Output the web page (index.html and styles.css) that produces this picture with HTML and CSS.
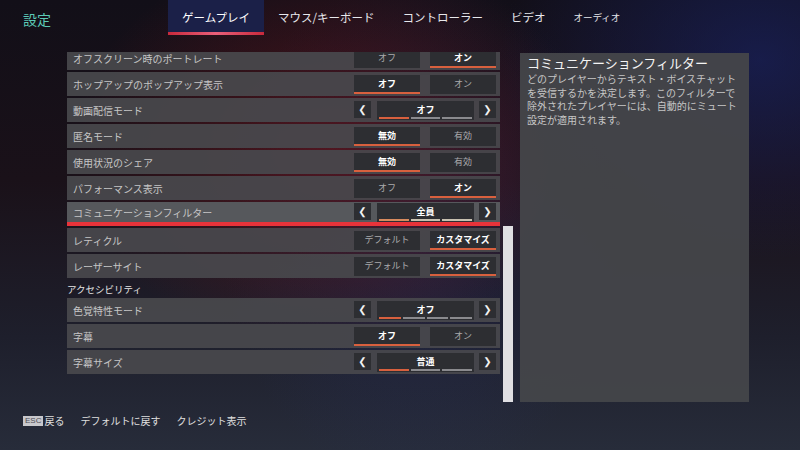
FILE: index.html
```html
<!DOCTYPE html>
<html lang="ja">
<head>
    <meta charset="UTF-8">
    <meta name="viewport" content="width=device-width, initial-scale=1.0">
    <title>設定</title>
    <link rel="stylesheet" href="styles.css">
</head>
<body>
    <header class="topbar">
        <div class="page-title">設定</div>
        <nav class="tabs">
            <div class="tab active">ゲームプレイ</div>
            <div class="tab">マウス/キーボード</div>
            <div class="tab">コントローラー</div>
            <div class="tab">ビデオ</div>
            <div class="tab small">オーディオ</div>
        </nav>
    </header>

    <main class="content">
        <div class="list-wrap">
            <div class="list">
                <div class="row">
                    <span class="label">オフスクリーン時のポートレート</span>
                    <div class="toggle">
                        <span class="opt">オフ</span>
                        <span class="opt on">オン</span>
                    </div>
                </div>
                <div class="row">
                    <span class="label">ホップアップのポップアップ表示</span>
                    <div class="toggle">
                        <span class="opt on">オフ</span>
                        <span class="opt">オン</span>
                    </div>
                </div>
                <div class="row">
                    <span class="label">動画配信モード</span>
                    <div class="picker">
                        <span class="arrow">&#10094;</span>
                        <span class="value">オフ
                            <span class="segs"><i class="cur"></i><i></i><i></i></span>
                        </span>
                        <span class="arrow">&#10095;</span>
                    </div>
                </div>
                <div class="row">
                    <span class="label">匿名モード</span>
                    <div class="toggle">
                        <span class="opt on">無効</span>
                        <span class="opt">有効</span>
                    </div>
                </div>
                <div class="row">
                    <span class="label">使用状況のシェア</span>
                    <div class="toggle">
                        <span class="opt on">無効</span>
                        <span class="opt">有効</span>
                    </div>
                </div>
                <div class="row">
                    <span class="label">パフォーマンス表示</span>
                    <div class="toggle">
                        <span class="opt">オフ</span>
                        <span class="opt on">オン</span>
                    </div>
                </div>
                <div class="row selected">
                    <span class="label">コミュニケーションフィルター</span>
                    <div class="picker">
                        <span class="arrow">&#10094;</span>
                        <span class="value">全員
                            <span class="segs light"><i class="cur"></i><i></i><i></i></span>
                        </span>
                        <span class="arrow">&#10095;</span>
                    </div>
                </div>
                <div class="row">
                    <span class="label">レティクル</span>
                    <div class="toggle">
                        <span class="opt">デフォルト</span>
                        <span class="opt on">カスタマイズ</span>
                    </div>
                </div>
                <div class="row">
                    <span class="label">レーザーサイト</span>
                    <div class="toggle">
                        <span class="opt">デフォルト</span>
                        <span class="opt on">カスタマイズ</span>
                    </div>
                </div>
                <div class="section">アクセシビリティ</div>
                <div class="row">
                    <span class="label">色覚特性モード</span>
                    <div class="picker">
                        <span class="arrow">&#10094;</span>
                        <span class="value">オフ
                            <span class="segs"><i class="cur"></i><i></i><i></i><i></i></span>
                        </span>
                        <span class="arrow">&#10095;</span>
                    </div>
                </div>
                <div class="row">
                    <span class="label">字幕</span>
                    <div class="toggle">
                        <span class="opt on">オフ</span>
                        <span class="opt">オン</span>
                    </div>
                </div>
                <div class="row">
                    <span class="label">字幕サイズ</span>
                    <div class="picker">
                        <span class="arrow">&#10094;</span>
                        <span class="value">普通
                            <span class="segs"><i class="cur"></i><i></i><i></i></span>
                        </span>
                        <span class="arrow">&#10095;</span>
                    </div>
                </div>
            </div>
        </div>
        <div class="scrollbar"><div class="thumb"></div></div>
        <aside class="info">
            <h2>コミュニケーションフィルター</h2>
            <p>どのプレイヤーからテキスト・ボイスチャット<br>を受信するかを決定します。このフィルターで<br>除外されたプレイヤーには、自動的にミュート<br>設定が適用されます。</p>
        </aside>
    </main>

    <footer class="bottombar">
        <span class="hint"><span class="key">ESC</span>戻る</span>
        <span class="hint">デフォルトに戻す</span>
        <span class="hint">クレジット表示</span>
    </footer>
</body>
</html>
```

FILE: styles.css
```css
body {
    margin: 0;
    width: 800px;
    height: 450px;
    overflow: hidden;
    font-family: "Noto Sans CJK JP", "Noto Sans", sans-serif;
    color: #d0d0d0;
    background:
        radial-gradient(ellipse 260px 200px at 330px 150px, rgba(115, 22, 28, 0.6), transparent),
        radial-gradient(ellipse 200px 260px at 420px 230px, rgba(40, 50, 110, 0.35), transparent),
        radial-gradient(ellipse 260px 200px at 760px 60px, rgba(25, 35, 100, 0.65), transparent),
        linear-gradient(180deg, #120f18 0%, #1a1119 40%, #1e1f2c 75%, #272c3a 100%);
}

.topbar {
    display: flex;
    align-items: flex-start;
    height: 35px;
}
.page-title {
    width: 145px;
    padding: 9px 0 0 23px;
    font-size: 14px;
    color: #5cc9b6;
}
.tabs {
    display: flex;
}
.tab {
    height: 32px;
    line-height: 35px;
    padding: 0 14px;
    font-size: 11.5px;
    color: #e8e8ec;
    border-bottom: 3px solid transparent;
}
.tab.active {
    background: #1b2048;
    border-image: linear-gradient(90deg, #c8283a, #e8607a 50%, #c8283a) 1;
    color: #fff;
}
.tab.small {
    font-size: 9.5px;
}

.content {
    display: flex;
    height: 350px;
    margin-top: 17px;
    padding-left: 67px;
}
.list-wrap {
    width: 433px;
    overflow: hidden;
}
.list {
    display: flex;
    flex-direction: column;
    gap: 2px;
    margin-top: -6px;
}
.row {
    display: flex;
    align-items: center;
    justify-content: space-between;
    height: 24px;
    padding: 0 4px 0 6px;
    background: rgba(72, 72, 76, 0.93);
}
.row.selected {
    height: 20px;
    background: #56585c;
    border-bottom: 4px solid #e8333a;
}
.label {
    font-size: 10px;
    color: #c6c6c6;
}
.section {
    height: 16px;
    line-height: 18px;
    font-size: 9.5px;
    color: #e6e6e6;
}

.toggle {
    display: flex;
    gap: 10px;
}
.opt {
    width: 66px;
    height: 17px;
    line-height: 17px;
    text-align: center;
    font-size: 9px;
    color: #ababad;
    background: #2d2e32;
    border-bottom: 2px solid transparent;
}
.opt.on {
    color: #fff;
    font-weight: bold;
    border-bottom-color: #d8603e;
}

.picker {
    display: flex;
    height: 19px;
}
.arrow {
    width: 17px;
    height: 17px;
    line-height: 17px;
    text-align: center;
    font-size: 10px;
    font-weight: bold;
    color: #f2f2f2;
    background: #2d2e32;
    font-family: "DejaVu Sans", sans-serif;
}
.value {
    position: relative;
    width: 97px;
    height: 19px;
    line-height: 17px;
    margin: 0 5px 0 6px;
    text-align: center;
    font-size: 9px;
    font-weight: bold;
    color: #fff;
    background: #2d2e32;
}
.segs {
    position: absolute;
    left: 2px;
    right: 2px;
    bottom: 1px;
    display: flex;
    gap: 2px;
}
.segs i {
    flex: 1;
    height: 2px;
    background: #8a8a8e;
}
.segs i.cur {
    background: #d8603e;
}
.segs.light i {
    background: #c8c0b0;
}
.segs.light i.cur {
    background: #d88a5e;
}

.scrollbar {
    display: flex;
    flex-direction: column;
    justify-content: flex-end;
    width: 10px;
    margin-left: 3px;
}
.thumb {
    height: 176px;
    background: #e0dfe3;
}

.info {
    width: 215px;
    height: 346px;
    margin: 1px 0 0 7px;
    padding: 1px 7px 2px;
    background: rgba(68, 70, 74, 0.95);
}
.info h2 {
    margin: 0;
    font-size: 13px;
    font-weight: normal;
    line-height: 18px;
    color: #f4f4f4;
}
.info p {
    margin: 0;
    font-size: 10px;
    line-height: 13.5px;
    color: #c6c6c6;
}

.bottombar {
    display: flex;
    gap: 16px;
    margin-top: 11px;
    padding-left: 23px;
    font-size: 10px;
    color: #e0e0e0;
}
.hint {
    display: flex;
    align-items: center;
}
.key {
    padding: 0 2px;
    margin-right: 1px;
    height: 10px;
    line-height: 10px;
    font-size: 8px;
    font-family: "Liberation Sans", sans-serif;
    color: #4c4c54;
    background: #c8c8cc;
}
```
